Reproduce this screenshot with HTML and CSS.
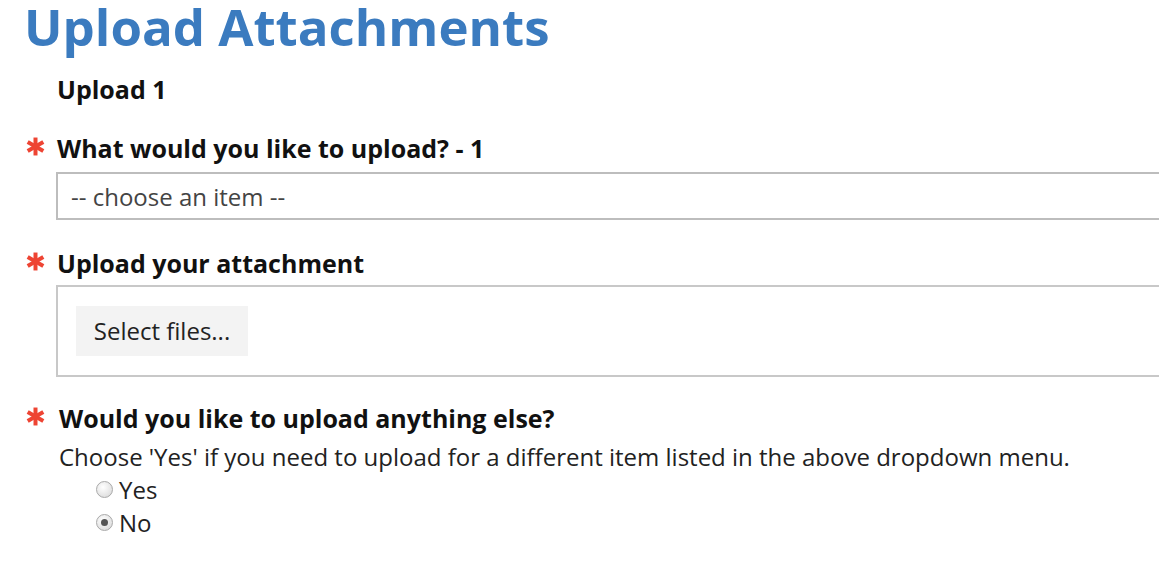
FILE: index.html
```html
<!DOCTYPE html>
<html>
<head>
<meta charset="utf-8">
<link rel="stylesheet" href="styles.css">
</head>
<body>
<div class="page">
  <h1 class="title">Upload Attachments</h1>
  <div class="section-title">Upload 1</div>

  <div class="field field-first">
    <div class="label-row">
      <span class="req"><svg width="19" height="19" viewBox="0 0 18 18"><g stroke="#ee4433" stroke-width="3.8" stroke-linecap="butt"><line x1="9" y1="0.5" x2="9" y2="17.5"/><line x1="1.6" y1="4.8" x2="16.4" y2="13.2"/><line x1="1.6" y1="13.2" x2="16.4" y2="4.8"/></g></svg></span>
      <label class="label">What would you like to upload? - 1</label>
    </div>
    <div class="select">-- choose an item --</div>
  </div>

  <div class="field field-second">
    <div class="label-row">
      <span class="req"><svg width="19" height="19" viewBox="0 0 18 18"><g stroke="#ee4433" stroke-width="3.8" stroke-linecap="butt"><line x1="9" y1="0.5" x2="9" y2="17.5"/><line x1="1.6" y1="4.8" x2="16.4" y2="13.2"/><line x1="1.6" y1="13.2" x2="16.4" y2="4.8"/></g></svg></span>
      <label class="label">Upload your attachment</label>
    </div>
    <div class="upload-box">
      <button class="select-files">Select files...</button>
    </div>
  </div>

  <div class="field field-third">
    <div class="label-row">
      <span class="req"><svg width="19" height="19" viewBox="0 0 18 18"><g stroke="#ee4433" stroke-width="3.8" stroke-linecap="butt"><line x1="9" y1="0.5" x2="9" y2="17.5"/><line x1="1.6" y1="4.8" x2="16.4" y2="13.2"/><line x1="1.6" y1="13.2" x2="16.4" y2="4.8"/></g></svg></span>
      <label class="label label-shift">Would you like to upload anything else?</label>
    </div>
    <div class="desc">Choose 'Yes' if you need to upload for a different item listed in the above dropdown menu.</div>
    <div class="radios">
      <label class="radio"><input type="radio" name="more"><span>Yes</span></label>
      <label class="radio"><input type="radio" name="more" checked><span>No</span></label>
    </div>
  </div>
</div>
</body>
</html>
```

FILE: styles.css
```css
html, body {
  margin: 0;
  padding: 0;
  background: #ffffff;
  overflow: hidden;
}

.page {
  width: 1300px;
  padding-left: 24px;
  font-family: "Open Sans", "Liberation Sans", sans-serif;
  color: #111111;
}

.title {
  margin: 0;
  font-size: 51px;
  line-height: 52px;
  font-weight: 700;
  color: #3b7bbf;
  height: 52px;
}

.section-title {
  margin: 21px 0 0 33px;
  font-size: 25px;
  line-height: 32px;
  font-weight: 700;
}

.field-first { margin-top: 27px; }
.field-second { margin-top: 27px; }
.field-third { margin-top: 25px; }

.label-row {
  display: flex;
  align-items: flex-start;
  height: 32px;
}

.req {
  width: 33px;
  flex: none;
  padding-left: 2px;
  padding-top: 5px;
  box-sizing: border-box;
  height: 32px;
}

.req svg { display: block; }

.label {
  font-size: 25px;
  line-height: 32px;
  font-weight: 700;
}

.label-shift { margin-left: 2px; }

.select {
  margin: 8px 0 0 32px;
  height: 48px;
  box-sizing: border-box;
  border: 2px solid #bdbdbd;
  padding-left: 13px;
  font-size: 24px;
  line-height: 45px;
  color: #444444;
}

.upload-box {
  margin: 6px 0 0 32px;
  height: 92px;
  box-sizing: border-box;
  border: 2px solid #c8c8c8;
  padding: 19px 0 0 18px;
}

.select-files {
  display: block;
  width: 172px;
  height: 50px;
  border: none;
  background: #f3f3f3;
  font-family: "Open Sans", "Liberation Sans", sans-serif;
  font-size: 24px;
  color: #222222;
  padding: 0 0 2px 0;
  text-align: center;
}

.desc {
  margin: 7px 0 0 35px;
  font-size: 24px;
  line-height: 32px;
  color: #222222;
}

.radios {
  margin-left: 72px;
}

.radio {
  display: flex;
  align-items: center;
  height: 33px;
  font-size: 24px;
  color: #222222;
}

.radio input {
  appearance: none;
  -webkit-appearance: none;
  margin: 0 6px 0 0;
  width: 17px;
  height: 17px;
  border-radius: 50%;
  border: 1px solid #a9a9a9;
  background: radial-gradient(circle at 40% 35%, #ffffff 0%, #e6e6e6 60%, #d4d4d4 100%);
  box-sizing: border-box;
  position: relative;
}

.radio input:checked::after {
  content: "";
  position: absolute;
  left: 4px;
  top: 4px;
  width: 7px;
  height: 7px;
  border-radius: 50%;
  background: #555555;
}
```
